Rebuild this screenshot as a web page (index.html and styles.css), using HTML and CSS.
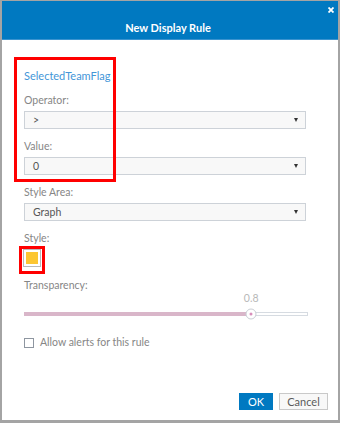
FILE: index.html
```html
<!DOCTYPE html>
<html lang="en">
<head>
  <meta charset="UTF-8" />
  <title>New Display Rule</title>
  <link rel="stylesheet" href="styles.css">
</head>
<body>
  <div class="dialog">
    <div class="header">
      <div class="close-row">
        <svg class="close" width="6" height="6" viewBox="0 0 6 6">
          <path d="M0.5 0.5 L5.5 5.5 M5.5 0.5 L0.5 5.5" stroke="#fff" stroke-width="1.8" />
        </svg>
      </div>
      <div class="title">New Display Rule</div>
    </div>

    <div class="content">
      <div class="rule-field">SelectedTeamFlag</div>

      <div class="field">
        <label class="field-label">Operator:</label>
        <div class="select"><span>&gt;</span><span class="arrow"></span></div>
      </div>

      <div class="field">
        <label class="field-label">Value:</label>
        <div class="select"><span>0</span><span class="arrow"></span></div>
      </div>

      <div class="field">
        <label class="field-label">Style Area:</label>
        <div class="select"><span>Graph</span><span class="arrow"></span></div>
      </div>

      <label class="field-label">Style:</label>
      <div class="swatch"><div class="swatch-color"></div></div>

      <label class="field-label transparency">Transparency:</label>
      <div class="slider">
        <div class="slider-value"><span style="left: 80%">0.8</span></div>
        <div class="slider-track">
          <div class="slider-fill" style="width: 80%"></div>
          <div class="slider-thumb" style="left: 80%"></div>
        </div>
      </div>

      <label class="check"><span class="check-box"></span>Allow alerts for this rule</label>
    </div>

    <div class="footer">
      <button class="btn btn-ok">OK</button>
      <button class="btn btn-cancel">Cancel</button>
    </div>

    <div class="mark mark-fields"></div>
    <div class="mark mark-style"></div>
  </div>
</body>
</html>
```

FILE: styles.css
```css
body {
  margin: 0;
  font-family: 'Lato', 'Noto Sans', sans-serif;
  background-color: #fff;
}
.dialog {
  position: relative;
  width: 340px;
  height: 423px;
  box-sizing: border-box;
  border: 2px solid #a4a4a4;
  border-top-width: 1px;
  border-bottom-width: 3px;
  display: flex;
  flex-direction: column;
  background-color: #fff;
}
.header {
  background-color: #0079c1;
  height: 39px;
  box-sizing: border-box;
  padding: 6px 4px 0 0;
  border-bottom: 1px solid #3a93cf;
}
.close-row {
  display: flex;
  justify-content: flex-end;
  height: 7px;
}
.close {
  display: block;
}
.title {
  margin-top: 5px;
  text-align: center;
  color: #fff;
  font-weight: bold;
  font-size: 11px;
  line-height: 18px;
}
.content {
  flex: 1;
  padding: 28px 32px 0 22px;
}
.rule-field {
  color: #4396d8;
  font-size: 11px;
  line-height: 16px;
  margin-bottom: 8px;
}
.field {
  margin-bottom: 9px;
}
.field-label {
  display: block;
  color: #868686;
  font-size: 10.5px;
  line-height: 16px;
  margin-bottom: 3px;
}
.select {
  height: 18px;
  box-sizing: border-box;
  border: 1px solid #cdd2d8;
  background-color: #f8f8f8;
  display: flex;
  align-items: center;
  justify-content: space-between;
  padding: 0 7px 0 8px;
  color: #555;
  font-size: 10.5px;
}
.arrow {
  width: 0;
  height: 0;
  border-left: 2.5px solid transparent;
  border-right: 2.5px solid transparent;
  border-top: 4px solid #333;
}
.swatch {
  width: 18px;
  height: 18px;
  box-sizing: border-box;
  margin: 1px 0 0 -1px;
  border: 1px solid #b9b9b9;
  padding: 2px;
}
.swatch-color {
  width: 12px;
  height: 12px;
  background-color: #fcc632;
}
.transparency {
  margin-top: 10px;
}
.slider {
  margin-right: -2px;
}
.slider-value {
  position: relative;
  height: 12px;
  margin-top: -4px;
  color: #b8b8b8;
  font-size: 10.5px;
  line-height: 12px;
}
.slider-value span {
  position: absolute;
  top: 0;
  transform: translateX(-50%);
}
.slider-track {
  position: relative;
  height: 4px;
  margin-top: 8px;
  box-sizing: border-box;
  border: 1px solid #d6dbe1;
  background-color: #fff;
}
.slider-fill {
  position: absolute;
  left: -1px;
  top: -1px;
  height: 4px;
  background-color: #d9b6c9;
}
.slider-thumb {
  position: absolute;
  top: 50%;
  width: 11px;
  height: 11px;
  box-sizing: border-box;
  border: 1px solid #c9ced4;
  border-radius: 50%;
  background-color: #fff;
  transform: translate(-50%, -50%);
}
.slider-thumb::after {
  content: "";
  position: absolute;
  left: 3px;
  top: 3px;
  width: 3px;
  height: 3px;
  border-radius: 50%;
  background-color: #d88fbb;
}
.check {
  display: flex;
  align-items: center;
  margin-top: 20px;
  color: #868686;
  font-size: 10.5px;
  line-height: 13px;
}
.check-box {
  width: 10px;
  height: 10px;
  box-sizing: border-box;
  border: 1px solid #8e96a0;
  margin-right: 6px;
}
.footer {
  display: flex;
  justify-content: flex-end;
  gap: 6px;
  padding: 0 10px 10px 0;
}
.btn {
  height: 17px;
  box-sizing: border-box;
  font-family: 'Lato', 'Noto Sans', sans-serif;
  font-size: 11px;
  padding: 0;
  border-radius: 0;
  cursor: pointer;
}
.btn-ok {
  width: 34px;
  background-color: #0079c1;
  color: #fff;
  border: 1px solid #0079c1;
}
.btn-cancel {
  width: 49px;
  background-color: #f8f8f8;
  color: #5a5a5a;
  border: 1px solid #c9c9c9;
}
.mark {
  position: absolute;
  box-sizing: border-box;
  border: 3px solid #ff0000;
}
.mark-fields {
  left: 12px;
  top: 56px;
  width: 102px;
  height: 125px;
}
.mark-style {
  left: 17px;
  top: 245px;
  width: 26px;
  height: 28px;
}
```
